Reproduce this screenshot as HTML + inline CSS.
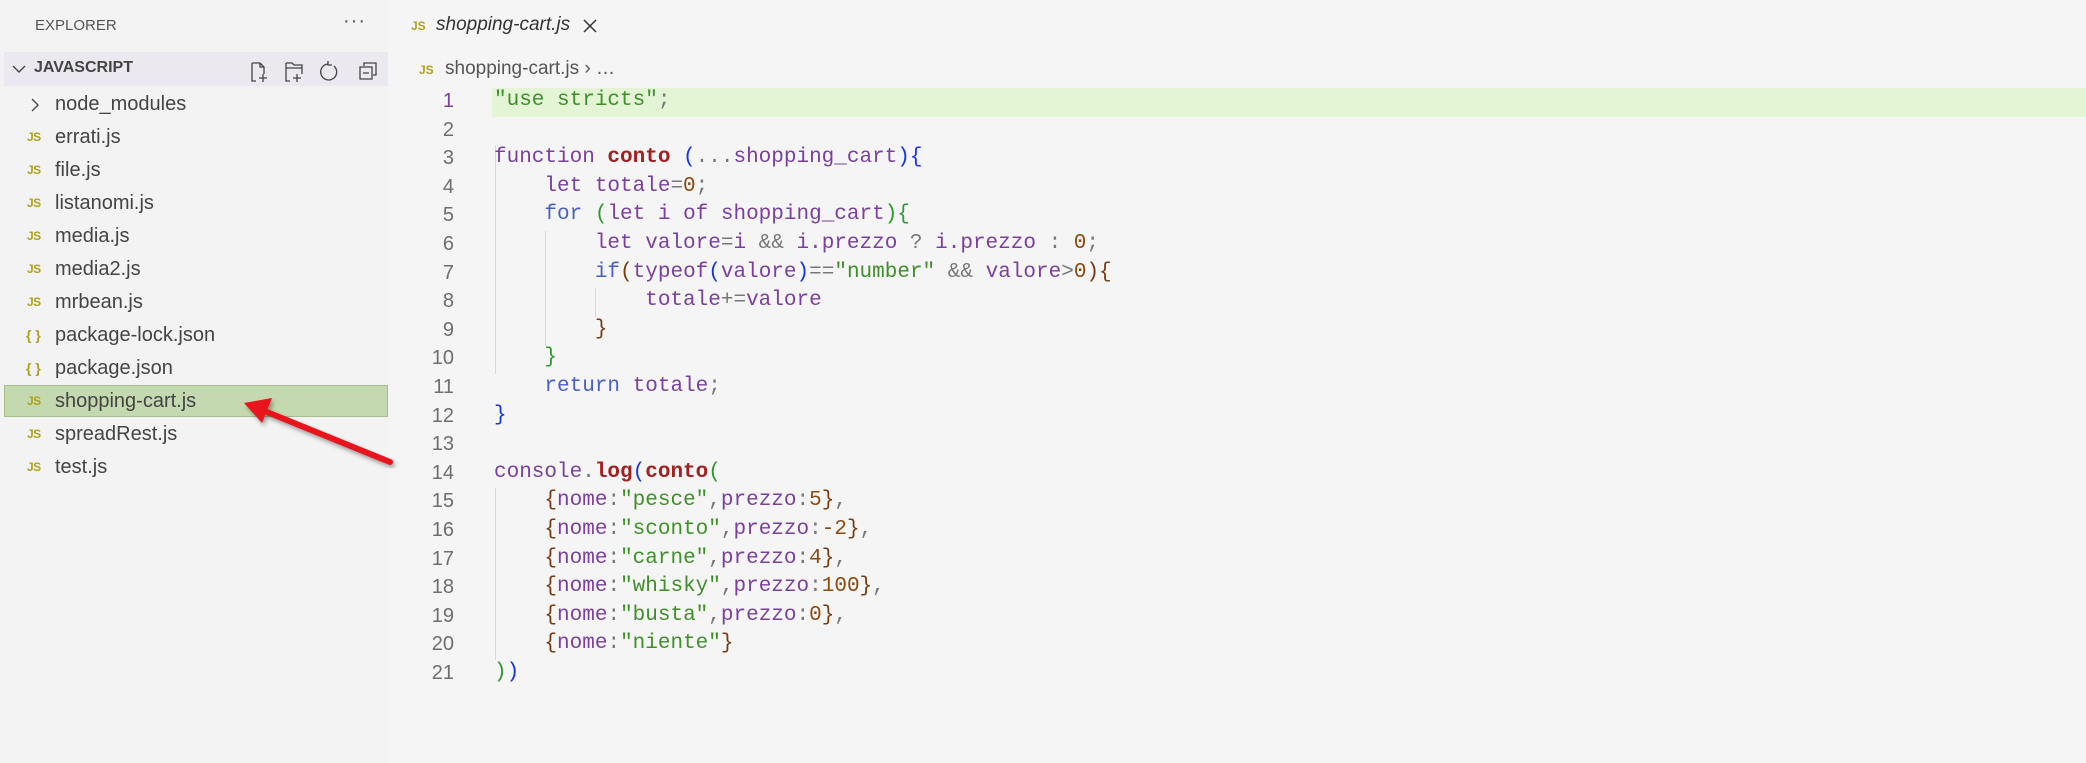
<!DOCTYPE html>
<html><head><meta charset="utf-8"><style>
*{margin:0;padding:0;box-sizing:border-box}
body{width:2086px;height:763px;overflow:hidden;background:#f5f5f5;font-family:"Liberation Sans",sans-serif;position:relative}
#side{position:absolute;left:0;top:0;width:388px;height:763px;background:#f3f3f3}
.t{position:absolute;white-space:nowrap}
.row{position:absolute;left:0;width:388px;height:33px;font-size:20px;color:#444;line-height:33px}
.row .js{position:absolute;left:27px;top:0;font-size:12px;font-weight:bold;color:#b0a020;letter-spacing:-0.5px}
.row .br{position:absolute;left:26px;top:0;font-size:14px;color:#b0a020;font-weight:bold}
.row .nm{position:absolute;left:55px;top:0}
#code{position:absolute;left:0;top:87px;font-family:"Liberation Mono",monospace;font-size:21px;letter-spacing:0px}
.ln{position:absolute;width:454px;text-align:right;color:#6e6e6e;font-family:"Liberation Sans",sans-serif;font-size:20px;height:28.6px;line-height:28.6px}
.cl{position:absolute;left:494px;white-space:pre;height:28.6px;line-height:28.6px;color:#7b3f9e}
.g{color:#3f8f2a}.k{color:#7b3f9e}.b{color:#4a5fc4}.f{color:#a32020;font-weight:bold}.n{color:#8a4a10}.o{color:#777}.p1{color:#1435e0}.p2{color:#2e9a2e}.p3{color:#7a3a10}
.guide{position:absolute;width:1px;background:#d8d8d8}
</style></head><body>
<div id="side">
<div class="t" style="left:35px;top:17px;font-size:15px;color:#555">EXPLORER</div>
<div class="t" style="left:343px;top:10px;font-size:20px;color:#555;letter-spacing:1px">···</div>
<div style="position:absolute;left:4px;top:52px;width:384px;height:34px;background:#ebe8ef"></div>
<svg style="position:absolute;left:12px;top:63px" width="14" height="12"><path d="M1 3 L7 9 L13 3" fill="none" stroke="#444" stroke-width="1.4"/></svg>
<div class="t" style="left:34px;top:59px;font-size:16px;font-weight:bold;color:#444">JAVASCRIPT</div>
<svg style="position:absolute;left:248px;top:59px" width="135" height="26" fill="none" stroke="#444" stroke-width="1.3">
<path d="M4 4 H12 L16 8 V15 M12 4 V8 H16 M4 4 V22 H8 M11 19 H19 M15 15 V23"/>
<path d="M38 4 H44 L46 6 H54 V15 M38 4 V22 H42 M38 9 H54 M45 19 H53 M49 15 V23"/>
<path d="M86 7 A8 8 0 1 1 80 5 M80 2 V6 H84"/>
<path d="M116 7 V4 H128 V16 H125 M112 8 H124 V20 H112 Z M115 14 H121"/>
</svg>
<div class="row" style="top:88px"><svg style="position:absolute;left:30px;top:10px" width="10" height="14"><path d="M2 1 L8 7 L2 13" fill="none" stroke="#444" stroke-width="1.3"/></svg><span class="nm">node_modules</span></div>
<div class="row" style="top:121px"><span class="js">JS</span><span class="nm">errati.js</span></div>
<div class="row" style="top:154px"><span class="js">JS</span><span class="nm">file.js</span></div>
<div class="row" style="top:187px"><span class="js">JS</span><span class="nm">listanomi.js</span></div>
<div class="row" style="top:220px"><span class="js">JS</span><span class="nm">media.js</span></div>
<div class="row" style="top:253px"><span class="js">JS</span><span class="nm">media2.js</span></div>
<div class="row" style="top:286px"><span class="js">JS</span><span class="nm">mrbean.js</span></div>
<div class="row" style="top:319px"><span class="br">{ }</span><span class="nm">package-lock.json</span></div>
<div class="row" style="top:352px"><span class="br">{ }</span><span class="nm">package.json</span></div>
<div style="position:absolute;left:4px;top:385px;width:384px;height:32px;background:#c5d9b0;border:1px solid #a3bf8c"></div>
<div class="row" style="top:385px"><span class="js">JS</span><span class="nm">shopping-cart.js</span></div>
<div class="row" style="top:418px"><span class="js">JS</span><span class="nm">spreadRest.js</span></div>
<div class="row" style="top:451px"><span class="js">JS</span><span class="nm">test.js</span></div>
</div>
<div class="t" style="left:411px;top:19px;font-size:12px;font-weight:bold;color:#b0a020">JS</div>
<div class="t" style="left:436px;top:14px;font-size:19px;font-style:italic;color:#333">shopping-cart.js</div>
<svg style="position:absolute;left:583px;top:19px" width="14" height="14"><path d="M1 1 L13 13 M13 1 L1 13" stroke="#333" stroke-width="1.5"/></svg>
<div class="t" style="left:419px;top:63px;font-size:12px;font-weight:bold;color:#b0a020">JS</div>
<div class="t" style="left:445px;top:58px;font-size:19px;color:#555">shopping-cart.js ›&nbsp;…</div>
<div style="position:absolute;left:492px;top:88px;width:1594px;height:29px;background:#e4f5d6"></div>
<div class="guide" style="left:495px;top:145px;height:229px"></div>
<div class="guide" style="left:545px;top:231px;height:115px"></div>
<div class="guide" style="left:595px;top:288px;height:29px"></div>
<div class="guide" style="left:495px;top:488px;height:172px"></div>
<div id="code">
<div class="ln" style="top:0;color:#7b3f9e">1</div><div class="cl" style="top:0"><span class="g">"use stricts"</span><span class="o">;</span></div>
<div class="ln" style="top:28.6px">2</div>
<div class="ln" style="top:57.2px">3</div><div class="cl" style="top:57.2px">function <span class="f">conto</span> <span class="p1">(</span><span class="o">...</span>shopping_cart<span class="p1">){</span></div>
<div class="ln" style="top:85.8px">4</div><div class="cl" style="top:85.8px">    let totale<span class="o">=</span><span class="n">0</span><span class="o">;</span></div>
<div class="ln" style="top:114.4px">5</div><div class="cl" style="top:114.4px">    <span class="b">for</span> <span class="p2">(</span>let i of shopping_cart<span class="p2">){</span></div>
<div class="ln" style="top:143px">6</div><div class="cl" style="top:143px">        let valore<span class="o">=</span>i <span class="o">&amp;&amp;</span> i.prezzo <span class="o">?</span> i.prezzo <span class="o">:</span> <span class="n">0</span><span class="o">;</span></div>
<div class="ln" style="top:171.6px">7</div><div class="cl" style="top:171.6px">        <span class="b">if</span><span class="p3">(</span>typeof<span class="p1">(</span>valore<span class="p1">)</span><span class="o">==</span><span class="g">"number"</span> <span class="o">&amp;&amp;</span> valore<span class="o">&gt;</span><span class="n">0</span><span class="p3">){</span></div>
<div class="ln" style="top:200.2px">8</div><div class="cl" style="top:200.2px">            totale<span class="o">+=</span>valore</div>
<div class="ln" style="top:228.8px">9</div><div class="cl" style="top:228.8px">        <span class="p3">}</span></div>
<div class="ln" style="top:257.4px">10</div><div class="cl" style="top:257.4px">    <span class="p2">}</span></div>
<div class="ln" style="top:286px">11</div><div class="cl" style="top:286px">    <span class="b">return</span> totale<span class="o">;</span></div>
<div class="ln" style="top:314.6px">12</div><div class="cl" style="top:314.6px"><span class="p1">}</span></div>
<div class="ln" style="top:343.2px">13</div>
<div class="ln" style="top:371.8px">14</div><div class="cl" style="top:371.8px">console<span class="o">.</span><span class="f">log</span><span class="p1">(</span><span class="f">conto</span><span class="p2">(</span></div>
<div class="ln" style="top:400.4px">15</div><div class="cl" style="top:400.4px">    <span class="p3">{</span>nome<span class="o">:</span><span class="g">"pesce"</span><span class="o">,</span>prezzo<span class="o">:</span><span class="n">5</span><span class="p3">}</span><span class="o">,</span></div>
<div class="ln" style="top:429px">16</div><div class="cl" style="top:429px">    <span class="p3">{</span>nome<span class="o">:</span><span class="g">"sconto"</span><span class="o">,</span>prezzo<span class="o">:</span><span class="n">-2</span><span class="p3">}</span><span class="o">,</span></div>
<div class="ln" style="top:457.6px">17</div><div class="cl" style="top:457.6px">    <span class="p3">{</span>nome<span class="o">:</span><span class="g">"carne"</span><span class="o">,</span>prezzo<span class="o">:</span><span class="n">4</span><span class="p3">}</span><span class="o">,</span></div>
<div class="ln" style="top:486.2px">18</div><div class="cl" style="top:486.2px">    <span class="p3">{</span>nome<span class="o">:</span><span class="g">"whisky"</span><span class="o">,</span>prezzo<span class="o">:</span><span class="n">100</span><span class="p3">}</span><span class="o">,</span></div>
<div class="ln" style="top:514.8px">19</div><div class="cl" style="top:514.8px">    <span class="p3">{</span>nome<span class="o">:</span><span class="g">"busta"</span><span class="o">,</span>prezzo<span class="o">:</span><span class="n">0</span><span class="p3">}</span><span class="o">,</span></div>
<div class="ln" style="top:543.4px">20</div><div class="cl" style="top:543.4px">    <span class="p3">{</span>nome<span class="o">:</span><span class="g">"niente"</span><span class="p3">}</span></div>
<div class="ln" style="top:572px">21</div><div class="cl" style="top:572px"><span class="p2">)</span><span class="p1">)</span></div>
</div>
<svg style="position:absolute;left:0;top:0" width="2086" height="763">
<defs><filter id="sh"><feDropShadow dx="2" dy="3" stdDeviation="2" flood-color="#000" flood-opacity="0.35"/></filter></defs>
<g filter="url(#sh)">
<path d="M390 462 L262 410" stroke="#e8161b" stroke-width="6" stroke-linecap="round"/>
<path d="M244 403 L272 398 L262 423 Z" fill="#e8161b"/>
</g>
</svg>
</body></html>
